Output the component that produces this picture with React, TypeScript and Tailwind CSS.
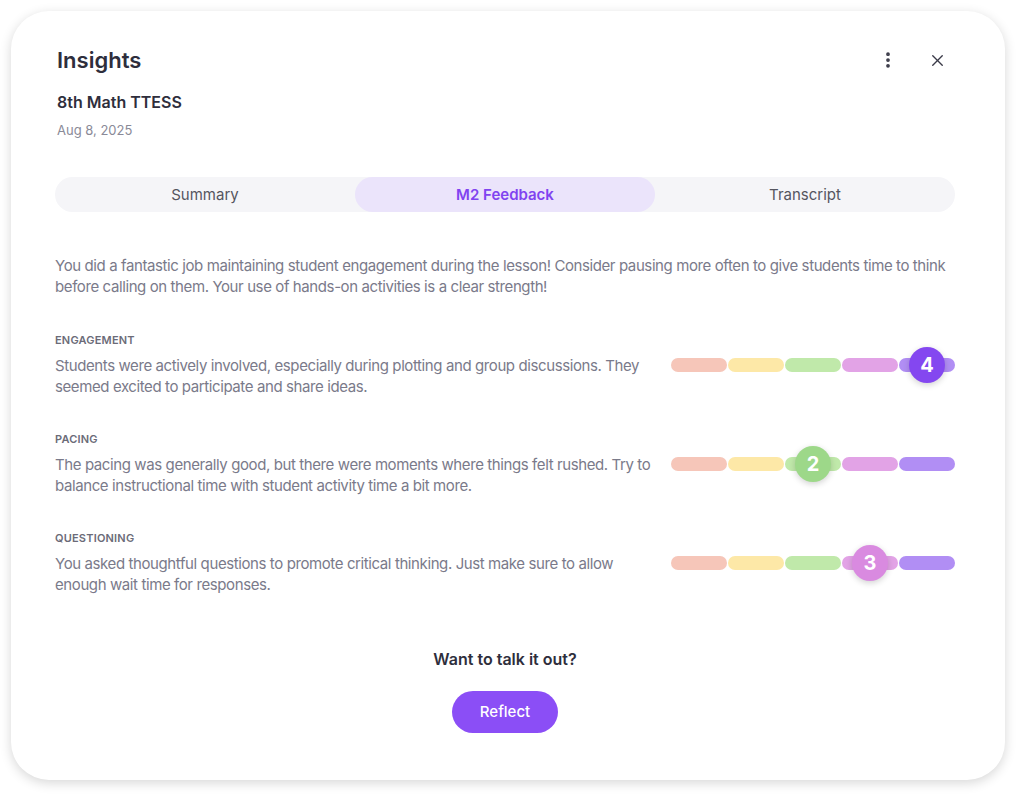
import { EllipsisVertical, X } from "lucide-react";

const segColors = ["bg-[#f6c6b9]", "bg-[#fde8a7]", "bg-[#c0e9aa]", "bg-[#e2a3e6]", "bg-[#b18ef4]"];
const knobColors = ["bg-[#f0a994]", "bg-[#f5cf63]", "bg-[#9dd889]", "bg-[#d98ae0]", "bg-[#8447f0]"];

const items = [
    {
        label: "ENGAGEMENT",
        text: "Students were actively involved, especially during plotting and group discussions. They seemed excited to participate and share ideas.",
        score: 4,
    },
    {
        label: "PACING",
        text: "The pacing was generally good, but there were moments where things felt rushed. Try to balance instructional time with student activity time a bit more.",
        score: 2,
    },
    {
        label: "QUESTIONING",
        text: "You asked thoughtful questions to promote critical thinking. Just make sure to allow enough wait time for responses.",
        score: 3,
    },
];

function ScoreBar({ score }: { score: number }) {
    return (
        <div className="flex w-[284px] gap-[1px]">
            {segColors.map((c, i) => (
                <div key={i} className="relative flex h-[14px] flex-1 items-center justify-center">
                    <div className={`h-full w-full rounded-full ${c}`} />
                    {i === score && (
                        <div
                            className={`absolute flex h-[36px] w-[36px] items-center justify-center rounded-full text-[20px] font-bold text-white shadow-[0_2px_6px_rgba(0,0,0,0.18)] ${knobColors[i]}`}
                        >
                            {score}
                        </div>
                    )}
                </div>
            ))}
        </div>
    );
}

export default function App() {
    const tabs = ["Summary", "M2 Feedback", "Transcript"];

    return (
        <div className="min-h-screen bg-white pl-[11px] pt-[11px] font-['Inter',sans-serif]">
            <div className="w-[994px] rounded-[38px] bg-white pb-[47px] pl-[44px] pr-[50px] pt-[35px] shadow-[0_3px_12px_rgba(0,0,0,0.16)]">
                <div className="flex items-start justify-between">
                    <div className="pl-[2px]">
                        <h1 className="text-[22px] leading-[28px] font-semibold text-[#2e2e3c]">Insights</h1>
                        <h2 className="mt-[17px] text-[16px] leading-[22px] font-semibold text-[#2e2e3c]">8th Math TTESS</h2>
                        <p className="mt-[8px] text-[13px] leading-[18px] text-[#8a8a98]">Aug 8, 2025</p>
                    </div>
                    <div className="mr-[8px] mt-[4px] flex items-center gap-[30px] text-[#3a3a48]">
                        <EllipsisVertical size={20} strokeWidth={2.5} />
                        <X size={19} strokeWidth={1.75} />
                    </div>
                </div>

                <div className="mt-[38px] grid h-[35px] grid-cols-3 rounded-full bg-[#f5f5f8]">
                    {tabs.map((t) => (
                        <div
                            key={t}
                            className={
                                t === "M2 Feedback"
                                    ? "flex items-center justify-center rounded-full bg-[#ebe4fb] pt-[2px] text-[15px] font-semibold text-[#8043f0]"
                                    : "flex items-center justify-center pt-[2px] text-[15px] text-[#55555f]"
                            }
                        >
                            {t}
                        </div>
                    ))}
                </div>

                <p className="mt-[43px] text-[15px] leading-[21px] tracking-[-0.4px] text-[#7a7a8a]">
                    You did a fantastic job maintaining student engagement during the lesson! Consider pausing more often to give students time to think before calling on them. Your use of hands-on activities is a clear strength!
                </p>

                <div className="mt-[36px] flex flex-col gap-[35px]">
                    {items.map((it) => (
                        <div key={it.label} className="flex items-center justify-between">
                            <div className="w-[605px]">
                                <div className="text-[11px] leading-[14px] font-semibold tracking-[0.2px] text-[#6b6b78]">{it.label}</div>
                                <p className="mt-[8px] text-[15px] leading-[21px] tracking-[-0.4px] text-[#7a7a8a]">{it.text}</p>
                            </div>
                            <ScoreBar score={it.score} />
                        </div>
                    ))}
                </div>

                <div className="mt-[53px] flex flex-col items-center">
                    <p className="text-[16px] leading-[22px] font-semibold text-[#2e2e3c]">Want to talk it out?</p>
                    <button className="mt-[21px] h-[42px] w-[106px] rounded-full bg-[#8b4ef6] text-[15px] font-medium text-white">
                        Reflect
                    </button>
                </div>
            </div>
        </div>
    );
}
